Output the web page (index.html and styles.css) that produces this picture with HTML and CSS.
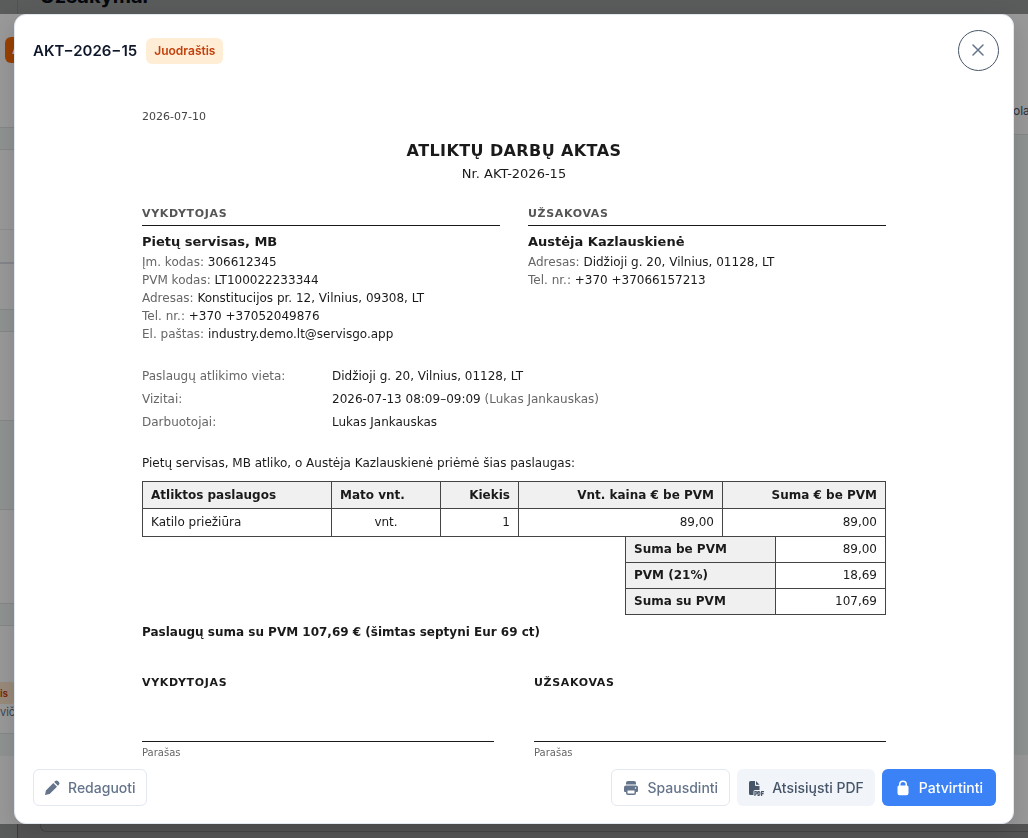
FILE: index.html
```html
<!DOCTYPE html>
<html lang="lt">
<head>
<meta charset="utf-8">
<meta name="viewport" content="width=device-width, initial-scale=1">
<title>AKT-2026-15</title>
<link rel="stylesheet" href="styles.css">
</head>
<body>
<div class="page" aria-hidden="true">
  <div class="page-top"><span class="page-title">Užsakymai</span></div>
  <div class="sheet">
    <div class="sheet-left">
      <div class="head"><span class="tag">A</span></div>
      <div class="band"></div>
      <div class="row row-a"></div>
      <div class="row row-b"></div>
      <div class="row row-c"></div>
      <div class="band"></div>
      <div class="row row-d"></div>
      <div class="band band-tall"></div>
      <div class="row row-e"></div>
      <div class="band"></div>
      <div class="row row-f"><span class="mini-badge">is</span><span class="mini-text">vič</span></div>
      <div class="band band-end"></div>
    </div>
    <div class="sheet-right">
      <div class="right-head"><span>ola</span></div>
      <div class="right-fill"></div>
    </div>
  </div>
  <div class="page-bottom"><div class="card-end"></div></div>
</div>

<div class="overlay">
  <section class="modal" role="dialog" aria-modal="true" aria-labelledby="modal-title">
    <header class="modal-head">
      <h1 id="modal-title" class="modal-title">AKT−2026−15</h1>
      <span class="badge">Juodraštis</span>
      <button class="close" type="button" aria-label="Uždaryti">
        <svg width="13" height="13" viewBox="0 0 13 13" fill="none" stroke="currentColor" stroke-width="1.5" stroke-linecap="round"><path d="M1 1l10 10M11 1L1 11"/></svg>
      </button>
    </header>

    <div class="scroll">
      <article class="doc">
        <p class="doc-date">2026-07-10</p>
        <h2 class="doc-title">ATLIKTŲ DARBŲ AKTAS</h2>
        <p class="doc-number">Nr. AKT-2026-15</p>

        <div class="parties">
          <section>
            <h3 class="party-role">VYKDYTOJAS</h3>
            <p class="party-name">Pietų servisas, MB</p>
            <p class="party-line"><span>Įm. kodas:</span> 306612345</p>
            <p class="party-line"><span>PVM kodas:</span> LT100022233344</p>
            <p class="party-line"><span>Adresas:</span> Konstitucijos pr. 12, Vilnius, 09308, LT</p>
            <p class="party-line"><span>Tel. nr.:</span> +370 +37052049876</p>
            <p class="party-line"><span>El. paštas:</span> industry.demo.lt@servisgo.app</p>
          </section>
          <section>
            <h3 class="party-role">UŽSAKOVAS</h3>
            <p class="party-name">Austėja Kazlauskienė</p>
            <p class="party-line"><span>Adresas:</span> Didžioji g. 20, Vilnius, 01128, LT</p>
            <p class="party-line"><span>Tel. nr.:</span> +370 +37066157213</p>
          </section>
        </div>

        <dl class="facts">
          <dt>Paslaugų atlikimo vieta:</dt><dd>Didžioji g. 20, Vilnius, 01128, LT</dd>
          <dt>Vizitai:</dt><dd>2026-07-13 08:09–09:09 <span>(Lukas Jankauskas)</span></dd>
          <dt>Darbuotojai:</dt><dd>Lukas Jankauskas</dd>
        </dl>

        <p class="intro">Pietų servisas, MB atliko, o Austėja Kazlauskienė priėmė šias paslaugas:</p>

        <table class="items">
          <colgroup><col class="c-name"><col class="c-unit"><col class="c-qty"><col class="c-price"><col class="c-sum"></colgroup>
          <thead>
            <tr><th>Atliktos paslaugos</th><th>Mato vnt.</th><th class="num">Kiekis</th><th class="num">Vnt. kaina € be PVM</th><th class="num">Suma € be PVM</th></tr>
          </thead>
          <tbody>
            <tr><td>Katilo priežiūra</td><td class="mid">vnt.</td><td class="num">1</td><td class="num">89,00</td><td class="num">89,00</td></tr>
          </tbody>
        </table>
        <table class="totals">
          <tbody>
            <tr><th scope="row">Suma be PVM</th><td class="num">89,00</td></tr>
            <tr><th scope="row">PVM (21%)</th><td class="num">18,69</td></tr>
            <tr><th scope="row">Suma su PVM</th><td class="num">107,69</td></tr>
          </tbody>
        </table>

        <p class="in-words">Paslaugų suma su PVM 107,69 € (šimtas septyni Eur 69 ct)</p>

        <div class="signatures">
          <section><h3 class="sign-role">VYKDYTOJAS</h3><p class="sign-line">Parašas</p></section>
          <section><h3 class="sign-role">UŽSAKOVAS</h3><p class="sign-line">Parašas</p></section>
        </div>
      </article>
    </div>

    <footer class="modal-foot">
      <button class="btn btn-outline btn-start" type="button">
        <svg class="icon" viewBox="0 0 16 16" fill="currentColor"><path d="M1 15l.9-4.6L9.300 3l3.700 3.700-7.400 7.400zM10.200 2.100l1-1a1.900 1.900 0 0 1 2.700 0l1 1a1.900 1.900 0 0 1 0 2.700l-1 1z"/></svg>
        Redaguoti
      </button>
      <button class="btn btn-outline" type="button">
        <svg class="icon" viewBox="0 0 16 16" fill="currentColor"><path d="M3 4.500V3a2 2 0 0 1 2-2h6a2 2 0 0 1 2 2v1.500z"/><path fill-rule="evenodd" d="M3 5.500h10a2 2 0 0 1 2 2V11a1 1 0 0 1-1 1h-1v1a2 2 0 0 1-2 2H5a2 2 0 0 1-2-2v-1H2a1 1 0 0 1-1-1V7.500a2 2 0 0 1 2-2zM4.500 10.500V13a.5.5 0 0 0 .5.5h6a.5.5 0 0 0 .5-.5v-2.500zM12.500 7.200a.8.8 0 1 0 0 1.600.8.8 0 0 0 0-1.600z"/></svg>
        Spausdinti
      </button>
      <button class="btn btn-soft" type="button">
        <svg class="icon" viewBox="0 0 16 16" fill="currentColor"><path d="M1 2.500A1.500 1.500 0 0 1 2.500 1H7v4a1 1 0 0 0 1 1h3.500v4H7a1.500 1.500 0 0 0-1.500 1.500V15h-3A1.500 1.500 0 0 1 1 13.500zM8 1l3.500 3.700H8z"/><path fill="none" stroke="currentColor" stroke-width="1.100" d="M6.900 16v-4.400h1a1.200 1.200 0 0 1 0 2.500h-1M10.100 11.600v3.800h.6c.8 0 1.200-.4 1.200-1.200v-1.400c0-.8-.4-1.200-1.200-1.200zM13.600 16v-4.400H16M13.600 13.600h2"/></svg>
        Atsisiųsti PDF
      </button>
      <button class="btn btn-primary" type="button">
        <svg class="icon" viewBox="0 0 16 16" fill="currentColor"><path fill-rule="evenodd" d="M4 5.500V4.500a4 4 0 0 1 8 0V5.500a1.600 1.600 0 0 1 1.500 1.600v6.200a2 2 0 0 1-2 2h-7a2 2 0 0 1-2-2V7.100A1.600 1.600 0 0 1 4 5.500zM5.500 5.500h5V4.500a2.500 2.500 0 0 0-5 0z"/></svg>
        Patvirtinti
      </button>
    </footer>
  </section>
</div>
</body>
</html>
```

FILE: styles.css
```css
* { box-sizing: border-box; }
html, body { height: 100%; margin: 0; }
body { overflow: hidden; font-family: "Inter", sans-serif; background: #5a5c5b; }
h1, h2, h3, p, dl, dd { margin: 0; }
button { font: inherit; cursor: pointer; }

/* dimmed page under the dialog */
.page { height: 100%; display: flex; flex-direction: column; overflow: hidden; }
.page-top { height: 14px; padding-left: 22px; margin-left: 17px; border-left: 1px solid #505352; display: flex; align-items: flex-end; }
.page-title { font-size: 20px; line-height: 24px; font-weight: 700; color: #05080f; padding-bottom: 6px; }
.sheet { flex: 1; min-height: 0; display: flex; justify-content: space-between; background: #999; overflow: hidden; }
.sheet-left { width: 15px; display: flex; flex-direction: column; overflow: hidden; }
.head { flex: none; height: 113px; padding: 23px 0 0 5px; }
.tag { display: block; width: 40px; height: 26px; padding-left: 7px; border-radius: 6px; background: #9a4100; color: #b9b0a8; font-size: 12px; line-height: 26px; font-weight: 600; }
.band { flex: none; height: 23px; background: #8f9391; border: solid #868888; border-width: 1px 0; }
.row { flex: none; }
.row-a { height: 79px; }
.row-b { height: 35px; border-top: 1px solid #8e8e8f; border-bottom: 2px solid #85858c; }
.row-c { height: 45px; }
.row-d { height: 88px; }
.band-tall { height: 90px; }
.row-e { height: 93px; }
.row-f { height: 107px; padding-top: 56px; }
.band-end { border-bottom: 0; }
.mini-badge { display: block; height: 22px; padding-right: 6px; border-radius: 0 4px 4px 0; background: #998b7b; color: #7d2608; font-size: 10px; line-height: 22px; font-weight: 600; }
.mini-text { display: block; font-size: 11px; line-height: 16px; color: #3d4453; }
.sheet-right { width: 15px; display: flex; flex-direction: column; overflow: hidden; }
.right-head { height: 121px; padding-top: 88px; border-bottom: 1px solid #868888; font-size: 12px; line-height: 18px; color: #2b323d; }
.right-fill { height: 620px; background: #8f9391; }
.page-bottom { height: 14px; padding-left: 22px; margin-left: 17px; border-left: 1px solid #3c3e3e; background: #545454; }
.card-end { height: 8px; border: solid #454545; border-width: 0 0 1px 1px; border-radius: 0 0 0 6px; }

/* dialog */
.overlay { position: fixed; inset: 0; display: flex; padding: 14px; }
.modal { flex: 1; min-width: 0; display: flex; flex-direction: column; background: #fff; border: 1px solid #e2e8f0; border-radius: 12px; box-shadow: 0 8px 24px rgba(0, 0, 0, .14); overflow: hidden; }
.modal-head { display: flex; align-items: center; gap: 9px; padding: 15px 14px 15px 18px; }
.modal-title { font-size: 15px; line-height: 24px; font-weight: 600; color: #0f172a; }
.badge { padding: 4px 8px; border-radius: 6px; background: #ffedd5; color: #c2410c; font-size: 12px; line-height: 18px; font-weight: 600; }
.close { display: grid; place-items: center; width: 41px; height: 41px; margin-left: auto; padding: 0; border: 1px solid #475569; border-radius: 50%; background: #fff; color: #64748b; }

.scroll { flex: 1; min-height: 0; overflow: hidden; padding: 0 20px; }
.doc { max-width: 744px; margin: 0 auto; padding-top: 23px; font-family: "DejaVu Sans", sans-serif; font-size: 12px; line-height: 18px; color: #1a1a1a; }
.doc-date { font-size: 11px; line-height: 16px; color: #444; }
.doc-title { margin-top: 14px; font-size: 16px; line-height: 24px; font-weight: 700; letter-spacing: .025em; text-align: center; }
.doc-number { margin-top: 1px; font-size: 13px; line-height: 20px; text-align: center; }
.parties { display: grid; grid-template-columns: 1fr 1fr; gap: 28px; margin-top: 22px; }
.party-role { padding-bottom: 3px; border-bottom: 1px solid #1a1a1a; font-size: 11px; line-height: 16px; letter-spacing: .06em; color: #555; }
.party-name { margin: 6px 0 1px; font-size: 13px; line-height: 20px; font-weight: 700; }
.party-line { font-size: 12px; line-height: 18px; }
.party-line span, .facts dt, .facts span { color: #666; }
.facts { display: grid; grid-template-columns: 190px 1fr; row-gap: 5px; margin-top: 24px; }
.intro { margin-top: 23px; }
.items, .totals { border-collapse: collapse; font-size: 12px; line-height: 18px; }
.items { width: 100%; margin-top: 9px; table-layout: fixed; }
.items th, .items td { padding: 4px 8px 5px; border: 1px solid #444; text-align: left; }
.items th { padding-bottom: 4px; }
.items th, .totals th { background: #f0f0f0; font-weight: 700; }
.c-name { width: 189px; }
.c-unit { width: 109px; }
.c-qty { width: 78px; }
.c-price { width: 204px; }
.items .num, .totals .num { text-align: right; }
.items .mid { text-align: center; }
.totals { width: 261px; margin: -1px 0 0 auto; }
.totals th, .totals td { padding: 3px 8px 4px; border: 1px solid #444; text-align: left; }
.totals th { width: 150px; }
.in-words { margin-top: 8px; font-weight: 700; }
.signatures { display: grid; grid-template-columns: 1fr 1fr; gap: 40px; margin-top: 34px; }
.sign-role { font-size: 11px; line-height: 16px; letter-spacing: .06em; }
.sign-line { margin-top: 50px; padding-top: 3px; border-top: 1px solid #1a1a1a; font-size: 10px; line-height: 16px; color: #666; }

.modal-foot { display: flex; gap: 7px; padding: 8px 17px 17px 18px; }
.btn { display: flex; align-items: center; gap: 8px; height: 37px; padding: 0 11px; border: 1px solid transparent; border-radius: 6px; font-size: 14px; line-height: 20px; font-weight: 500; white-space: nowrap; }
.btn-start { margin-right: auto; }
.btn-start, .btn-soft { padding: 0 10px; }
.btn-outline { border-color: #e2e8f0; background: #fff; color: #64748b; }
.btn-soft { background: #f1f5f9; color: #475569; }
.btn-primary { padding: 0 12px; background: #3b82f6; color: #fff; }
.icon { width: 16px; height: 16px; overflow: visible; }
```
